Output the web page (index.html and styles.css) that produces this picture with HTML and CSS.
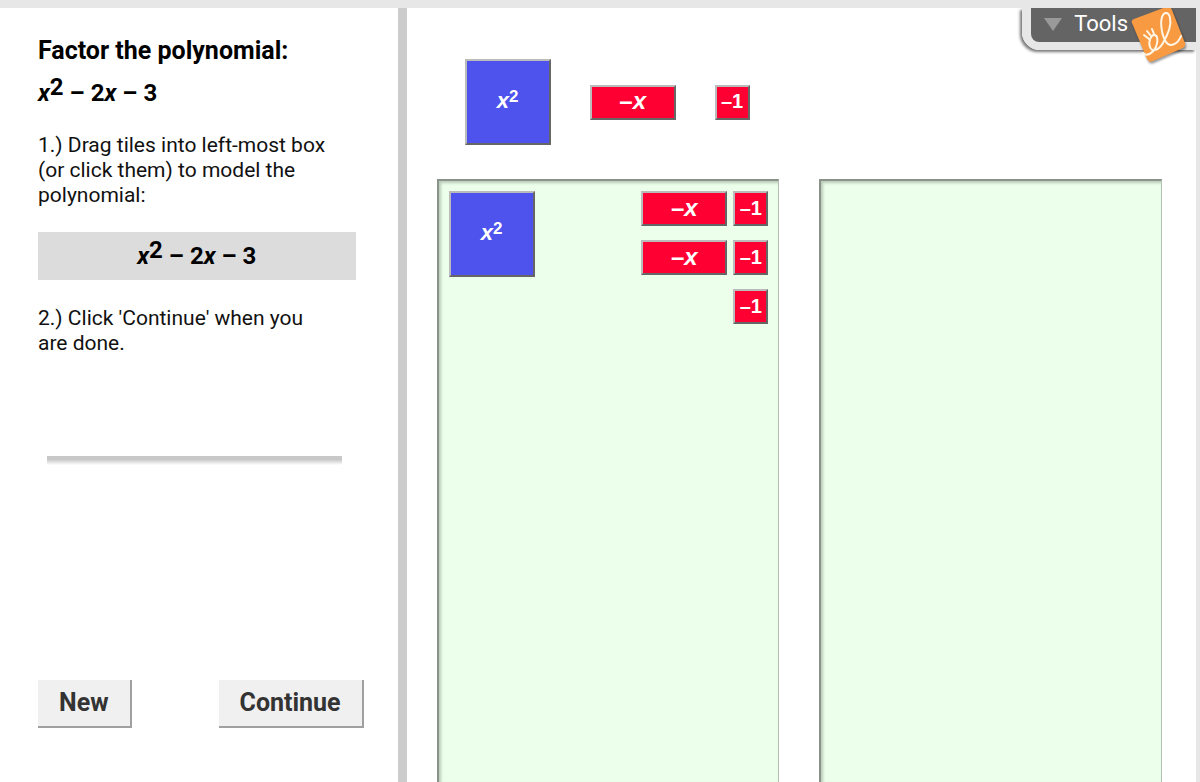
FILE: index.html
```html
<!DOCTYPE html>
<html lang="en">
<head>
<meta charset="utf-8">
<title>Algebra Tiles</title>
<link rel="stylesheet" href="styles.css">
</head>
<body>
<div class="app">
  <aside class="sidebar">
    <h1 class="title">Factor the polynomial:</h1>
    <p class="poly"><i>x</i><sup>2</sup> – 2<i>x</i> – 3</p>
    <p class="step">1.) Drag tiles into left-most box (or click them) to model the polynomial:</p>
    <p class="poly poly-box"><i>x</i><sup>2</sup> – 2<i>x</i> – 3</p>
    <p class="step">2.) Click 'Continue' when you are done.</p>
    <hr class="divider">
    <div class="actions">
      <button class="btn" type="button">New</button>
      <button class="btn" type="button">Continue</button>
    </div>
  </aside>
  <main class="work">
    <div class="palette">
      <button class="tile square" type="button"><span><i>x</i><sup>2</sup></span></button>
      <button class="tile bar" type="button"><span>–<i>x</i></span></button>
      <button class="tile unit" type="button"><span>–1</span></button>
    </div>
    <div class="boxes">
      <section class="box">
        <button class="tile square" type="button"><span><i>x</i><sup>2</sup></span></button>
        <div class="column">
          <button class="tile bar" type="button"><span>–<i>x</i></span></button>
          <button class="tile bar" type="button"><span>–<i>x</i></span></button>
        </div>
        <div class="column units">
          <button class="tile unit" type="button"><span>–1</span></button>
          <button class="tile unit" type="button"><span>–1</span></button>
          <button class="tile unit" type="button"><span>–1</span></button>
        </div>
      </section>
      <section class="box"></section>
    </div>
    <div class="tools">
      <button class="tools-btn" type="button">
        <svg width="18" height="13" viewBox="0 0 18 13" aria-hidden="true"><path d="M0 0H18L9 13Z" fill="#999"/></svg>
        Tools
      </button>
      <svg class="logo" width="68" height="60" viewBox="0 8 68 60" aria-hidden="true">
        <path class="logo-card" d="M14 19L46 7Q50 6 52 10L65 43Q66 46 63 48L33 61Q29 63 27 59L12 23Q11 20 14 19Z"/>
        <g class="logo-line">
          <path d="M23 53C27 57 33 53 36 47C38 42 38 36 35 35C31 34 28 42 30 47C32 53 39 50 43 43C47 36 52 26 50 18C49 12 44 11 42 17C40 24 42 36 46 42C50 48 58 44 61 36"/>
          <path d="M24 35L29 39M27 31L31 36M32 29L34 34"/>
        </g>
      </svg>
    </div>
  </main>
</div>
</body>
</html>
```
FILE: styles.css
```css
* { box-sizing: border-box; }

body {
  margin: 0;
  background: #e7e7e7;
  color: #000;
  font-family: Roboto, "Liberation Sans", sans-serif;
}

.app {
  display: flex;
  min-height: 100vh;
  padding: 8px 4px 0 0;
}

.sidebar {
  flex: 0 0 34%;
  display: flex;
  flex-direction: column;
  padding: 27px 34px 54px 38px;
  border-right: 9px solid #ccc;
  background: #fff;
}

.title {
  margin: 0 0 10px;
  font-size: 25px;
  line-height: 32px;
}

.poly {
  margin: 0;
  font-size: 24px;
  font-weight: bold;
  line-height: 32px;
}

sup {
  font-size: 24px;
  line-height: 0;
  vertical-align: 6px;
}

.step {
  max-width: 290px;
  margin: 24px 0;
  color: #111;
  font-size: 21px;
  line-height: 25px;
}

.poly-box {
  padding: 8px;
  margin: 0 8px 2px 0;
  background: #dcdcdc;
  text-align: center;
}

.divider {
  height: 9px;
  margin: 76px 22px 0 9px;
  border: 0;
  background: linear-gradient(#c8c8c8 40%, #fff);
}

.actions {
  display: flex;
  justify-content: space-between;
  margin-top: auto;
}

.btn {
  padding: 7px 21px;
  border: solid #a0a0a0;
  border-width: 0 2px 2px 0;
  background: #f0f0f0;
  color: #333;
  font: bold 25px/32px Roboto, "Liberation Sans", sans-serif;
}

.work {
  position: relative;
  flex: 1;
  display: flex;
  flex-direction: column;
  padding: 51px 34px 0 30px;
  background: #fff;
}

.palette {
  display: flex;
  align-items: center;
  gap: 39px;
  padding-left: 28px;
  margin-bottom: 34px;
}

.tile {
  flex: none;
  display: flex;
  align-items: center;
  justify-content: center;
  height: 35px;
  padding: 0 0 2px;
  border: 2px solid;
  border-color: #bbb #666 #666 #bbb;
  background: #ff0033;
  color: #fff;
  font: bold 20px/24px "Liberation Sans", sans-serif;
}

.tile sup {
  font-size: 17px;
}

.square {
  width: 86px;
  height: 86px;
  background: #4d53ec;
  font-size: 22px;
}

.bar {
  width: 86px;
  font-size: 24px;
}

.unit { width: 35px; }

.boxes {
  flex: 1;
  display: grid;
  grid-template-columns: 1fr 1fr;
  gap: 40px;
}

.box {
  display: flex;
  align-items: flex-start;
  justify-content: flex-end;
  gap: 6px;
  padding: 10px 10px 0;
  border: solid;
  border-width: 2px 1px 0 2px;
  border-color: #89938a #b4c0b4 #89938a #89938a;
  background: #ebffeb;
  box-shadow: inset 2px 2px 3px #b9cbb9;
}

.box .square { margin-right: auto; }

.column {
  display: flex;
  flex-direction: column;
  gap: 14px;
}

.tools {
  position: absolute;
  top: 0;
  right: 0;
  border: solid #e7e7e7;
  border-width: 0 0 8px 9px;
  border-radius: 0 0 0 18px;
  box-shadow: -2px 2px 3px #777;
  clip-path: inset(0 0 -20px -10px);
}

.tools-btn {
  display: flex;
  align-items: center;
  gap: 12px;
  height: 34px;
  padding: 0 68px 2px 13px;
  border: 0;
  border-radius: 0 0 0 8px;
  background: #646464;
  color: #fff;
  font: 22px/30px Roboto, "Liberation Sans", sans-serif;
}

.logo {
  position: absolute;
  top: 0;
  right: 8px;
}

.logo-card {
  fill: #f79a42;
  filter: drop-shadow(1px 2px 1px #0006);
}

.logo-line {
  fill: none;
  stroke: #fff6e6;
  stroke-width: 2;
  stroke-linecap: round;
}
```
